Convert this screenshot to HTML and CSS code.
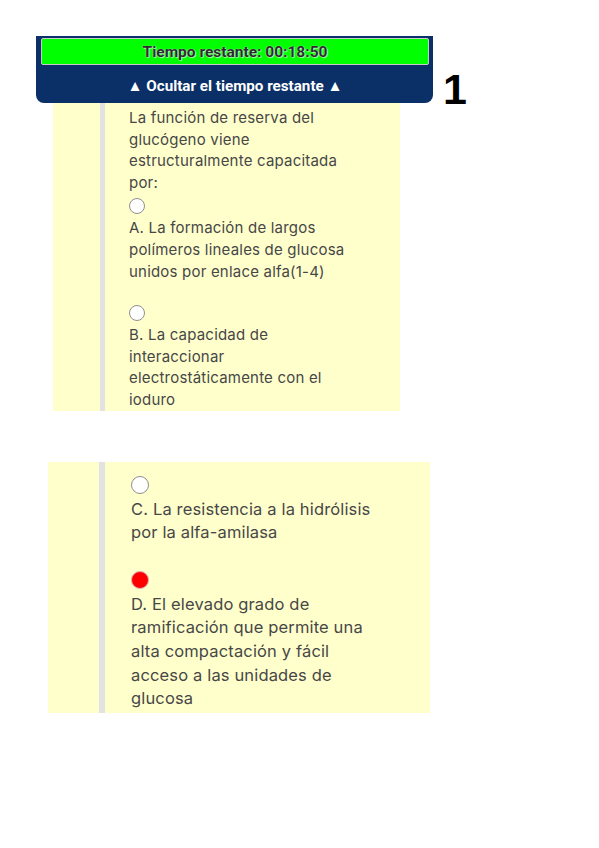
FILE: index.html
```html
<!DOCTYPE html>
<html lang="es">
<head>
<meta charset="utf-8">
<title>Pregunta 1</title>
<link rel="stylesheet" href="styles.css">
</head>
<body>
<div class="page">
  <div class="top">
    <div class="timer">
      <div class="timer-bar">Tiempo restante: 00:18:50</div>
      <div class="timer-toggle">▲ Ocultar el tiempo restante ▲</div>
    </div>
    <div class="qno">1</div>
  </div>

  <div class="q q1">
    <div class="q-inner">
      <p class="stem">La función de reserva del glucógeno viene estructuralmente capacitada por:</p>
      <div class="opt">
        <span class="radio"></span>
        <span class="txt">A. La formación de largos polímeros lineales de glucosa unidos por enlace alfa(1-4)</span>
      </div>
      <div class="opt">
        <span class="radio"></span>
        <span class="txt">B. La capacidad de interaccionar electrostáticamente con el ioduro</span>
      </div>
    </div>
  </div>

  <div class="q q2">
    <div class="q-inner">
      <div class="opt">
        <span class="radio"></span>
        <span class="txt">C. La resistencia a la hidrólisis por la alfa-amilasa</span>
      </div>
      <div class="opt">
        <span class="radio checked"></span>
        <span class="txt">D. El elevado grado de ramificación que permite una alta compactación y fácil acceso a las unidades de glucosa</span>
      </div>
    </div>
  </div>
</div>
</body>
</html>
```

FILE: styles.css
```css
html, body {
  margin: 0;
  padding: 0;
  background: #ffffff;
}

.page {
  padding-top: 36px;
  font-family: Inter, "Noto Sans", sans-serif;
}

.top {
  display: flex;
  align-items: flex-start;
  margin-left: 36px;
}

.timer {
  width: 397px;
  height: 67px;
  box-sizing: border-box;
  background: #0b3068;
  border-radius: 0 0 8px 8px;
  padding: 2px 4px 0 5px;
  display: flex;
  flex-direction: column;
  font-family: Roboto, "Liberation Sans", sans-serif;
}

.timer-bar {
  height: 27px;
  box-sizing: border-box;
  background: #00ff00;
  border: 1px solid #c9c9c9;
  border-radius: 2px;
  display: flex;
  align-items: center;
  justify-content: center;
  font-size: 15.5px;
  font-weight: 700;
  color: #2b2b2b;
  text-shadow: 0 0 1px #ffffff, 1px 1px 1px rgba(255,255,255,0.6);
}

.timer-toggle {
  flex: 1;
  display: flex;
  align-items: center;
  justify-content: center;
  color: #ffffff;
  font-size: 15.2px;
  font-weight: 700;
  padding-top: 3px;
}

.qno {
  margin-left: 10px;
  margin-top: 39px;
  font-family: "Liberation Sans", Arial, sans-serif;
  font-weight: 700;
  font-size: 43px;
  line-height: 28px;
  color: #000000;
}

.q {
  background: #ffffcc;
  color: #474747;
}

.q1 {
  margin-left: 53px;
  width: 347px;
  font-size: 15px;
  line-height: 21.6px;
  letter-spacing: 0.2px;
}

.q1 .q-inner {
  margin-left: 47px;
  border-left: 5px solid #e2e2e2;
  padding: 4px 40px 0 24px;
}

.stem {
  margin: 0 0 5px 0;
}

.opt {
  display: flex;
  flex-direction: column;
  align-items: flex-start;
}

.q1 .opt + .opt {
  margin-top: 23px;
}

.q1 .radio {
  width: 16px;
  height: 16px;
  margin-bottom: 3px;
}

.radio {
  display: block;
  box-sizing: border-box;
  border: 1.5px solid #8f8f8f;
  border-radius: 50%;
  background: #ffffff;
}

.radio.checked {
  background: #ff0000;
  border-color: #d8b0b0;
}

.q2 {
  margin-top: 51px;
  margin-left: 48px;
  width: 382px;
  font-size: 16.5px;
  line-height: 23.6px;
  letter-spacing: 0.15px;
}

.q2 .q-inner {
  margin-left: 51px;
  border-left: 6px solid #e2e2e2;
  padding: 14px 50px 2px 26px;
}

.q2 .radio {
  width: 18px;
  height: 18px;
  margin-bottom: 4px;
}

.q2 .opt + .opt {
  margin-top: 26px;
}
```
